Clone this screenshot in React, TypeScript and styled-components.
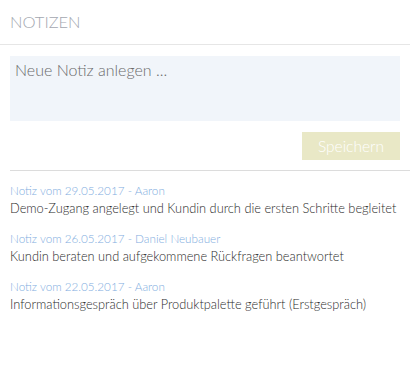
import React from "react";
import styled, { createGlobalStyle } from "styled-components";

const Global = createGlobalStyle`
  html, body { margin: 0; padding: 0; background: #fff; }
  body { font-family: Lato, "Open Sans", sans-serif; }
  * { box-sizing: border-box; }
`;

const Panel = styled.div`
  width: 410px;
  display: flex;
  flex-direction: column;
`;

const Header = styled.div`
  height: 45px;
  padding: 11px 10px 0;
  border-bottom: 1px solid #e6e6e6;
  font-family: Lato, sans-serif;
  font-weight: 300;
  font-size: 16.5px;
  color: #a3a7b0;
  line-height: 22px;
`;

const Form = styled.div`
  padding: 11px 10px 10px;
  display: flex;
  flex-direction: column;
  align-items: flex-end;
  gap: 11px;
`;

const NoteInput = styled.textarea`
  width: 100%;
  height: 65px;
  border: none;
  resize: none;
  outline: none;
  background: #f1f5fa;
  padding: 3px 5px;
  font-family: Lato, sans-serif;
  font-size: 16px;
  line-height: 22px;
  font-weight: 300;
  color: #555;
  &::placeholder { color: #6a6a6a; }
`;

const SaveButton = styled.button`
  width: 98px;
  height: 28px;
  border: none;
  background: #e9e8c6;
  color: #fff;
  font-family: Lato, sans-serif;
  font-weight: 300;
  font-size: 15.5px;
  padding: 0;
`;

const Divider = styled.div`
  margin-left: 10px;
  border-top: 1px solid #dcdcdc;
`;

const List = styled.div`
  padding: 10px 10px 0;
  display: flex;
  flex-direction: column;
  gap: 12px;
`;

const Note = styled.div`
  display: flex;
  flex-direction: column;
`;

const Meta = styled.div`
  font-family: Lato, sans-serif;
  font-weight: 300;
  font-size: 11.7px;
  line-height: 18px;
  color: #7fade0;
`;

const Body = styled.div`
  font-family: Lato, sans-serif;
  font-weight: 300;
  font-size: 12.8px;
  line-height: 18px;
  color: #2a2a2a;
  white-space: nowrap;
`;

const notes = [
  { meta: "Notiz vom 29.05.2017 - Aaron", text: "Demo-Zugang angelegt und Kundin durch die ersten Schritte begleitet" },
  { meta: "Notiz vom 26.05.2017 - Daniel Neubauer", text: "Kundin beraten und aufgekommene Rückfragen beantwortet" },
  { meta: "Notiz vom 22.05.2017 - Aaron", text: "Informationsgespräch über Produktpalette geführt (Erstgespräch)" },
];

export default function App() {
  return (
    <>
      <Global />
      <Panel>
        <Header>NOTIZEN</Header>
        <Form>
          <NoteInput placeholder="Neue Notiz anlegen ..." />
          <SaveButton>Speichern</SaveButton>
        </Form>
        <Divider />
        <List>
          {notes.map((n) => (
            <Note key={n.meta}>
              <Meta>{n.meta}</Meta>
              <Body>{n.text}</Body>
            </Note>
          ))}
        </List>
      </Panel>
    </>
  );
}
